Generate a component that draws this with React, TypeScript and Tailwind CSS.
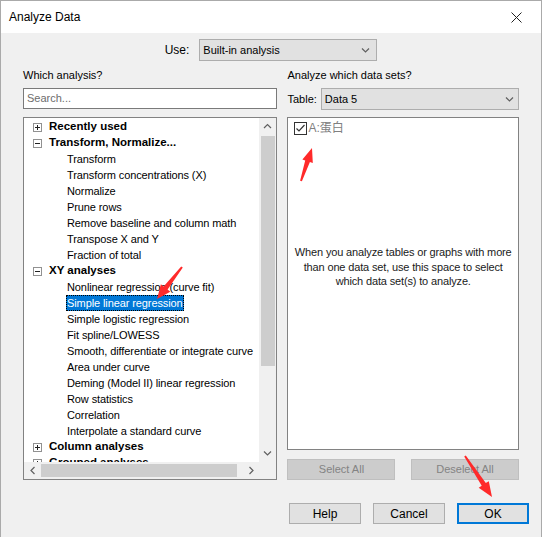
import React from "react";

type Row = { label: string; kind: "head" | "child"; expanded?: boolean; selected?: boolean };

const rows: Row[] = [
  { label: "Recently used", kind: "head", expanded: false },
  { label: "Transform, Normalize...", kind: "head", expanded: true },
  { label: "Transform", kind: "child" },
  { label: "Transform concentrations (X)", kind: "child" },
  { label: "Normalize", kind: "child" },
  { label: "Prune rows", kind: "child" },
  { label: "Remove baseline and column math", kind: "child" },
  { label: "Transpose X and Y", kind: "child" },
  { label: "Fraction of total", kind: "child" },
  { label: "XY analyses", kind: "head", expanded: true },
  { label: "Nonlinear regression (curve fit)", kind: "child" },
  { label: "Simple linear regression", kind: "child", selected: true },
  { label: "Simple logistic regression", kind: "child" },
  { label: "Fit spline/LOWESS", kind: "child" },
  { label: "Smooth, differentiate or integrate curve", kind: "child" },
  { label: "Area under curve", kind: "child" },
  { label: "Deming (Model II) linear regression", kind: "child" },
  { label: "Row statistics", kind: "child" },
  { label: "Correlation", kind: "child" },
  { label: "Interpolate a standard curve", kind: "child" },
  { label: "Column analyses", kind: "head", expanded: false },
  { label: "Grouped analyses", kind: "head", expanded: false },
];

function ExpandBox({ expanded }: { expanded: boolean }) {
  return (
    <svg width="9" height="9" viewBox="0 0 9 9" className="shrink-0">
      <rect x="0.5" y="0.5" width="8" height="8" fill="#fff" stroke="#919191" />
      <line x1="2" y1="4.5" x2="7" y2="4.5" stroke="#222" />
      {!expanded && <line x1="4.5" y1="2" x2="4.5" y2="7" stroke="#222" />}
    </svg>
  );
}

function Chevron({ dir }: { dir: "down" | "up" | "left" | "right" }) {
  const d =
    dir === "down"
      ? "M1 1.5 L4.5 5 L8 1.5"
      : dir === "up"
      ? "M1 5 L4.5 1.5 L8 5"
      : dir === "left"
      ? "M5.5 1 L2 4.5 L5.5 8"
      : "M2.5 1 L6 4.5 L2.5 8";
  const w = dir === "down" || dir === "up" ? 9 : 8;
  const h = dir === "down" || dir === "up" ? 7 : 9;
  return (
    <svg width={w} height={h} viewBox={`0 0 ${w} ${h}`}>
      <path d={d} fill="none" stroke="#606060" strokeWidth="1.2" />
    </svg>
  );
}

function arrowPoints(tx: number, ty: number, hx: number, hy: number, headLen: number, headW: number, tailW: number, neckW: number) {
  const dx = hx - tx;
  const dy = hy - ty;
  const len = Math.hypot(dx, dy);
  const ux = dx / len;
  const uy = dy / len;
  const px = -uy;
  const py = ux;
  const bx = hx - ux * headLen;
  const by = hy - uy * headLen;
  const pts = [
    [tx + px * tailW / 2, ty + py * tailW / 2],
    [bx + px * neckW / 2, by + py * neckW / 2],
    [bx + px * headW / 2, by + py * headW / 2],
    [hx, hy],
    [bx - px * headW / 2, by - py * headW / 2],
    [bx - px * neckW / 2, by - py * neckW / 2],
    [tx - px * tailW / 2, ty - py * tailW / 2],
  ];
  return pts.map((p) => `${p[0].toFixed(1)},${p[1].toFixed(1)}`).join(" ");
}

export default function App() {
  return (
    <div className="relative w-[542px] h-[537px] bg-[#f0f0f0] border-x border-t border-[#aaaaaa] flex flex-col font-['Liberation_Sans',Arial,sans-serif] text-[11px] text-black overflow-hidden">
      {/* Title bar */}
      <div className="h-[32px] bg-white flex items-center pl-[8px] pr-[19px] shrink-0">
        <span className="text-[12px] flex-1">Analyze Data</span>
        <svg width="11" height="11" viewBox="0 0 11 11">
          <path d="M0.5 0.5 L10.5 10.5 M10.5 0.5 L0.5 10.5" stroke="#222" strokeWidth="1" />
        </svg>
      </div>

      <div className="flex flex-col px-[22px]">
        {/* Use row */}
        <div className="mt-[6px] flex justify-center items-center gap-[10px] h-[22px]">
          <span className="text-[12px]">Use:</span>
          <div className="w-[178px] h-[22px] bg-[#e1e1e1] border border-[#adadad] flex items-center pl-[3px] pr-[6px]">
            <span className="flex-1 text-[11px]">Built-in analysis</span>
            <Chevron dir="down" />
          </div>
        </div>

        {/* Columns */}
        <div className="mt-[7px] flex gap-[10px]">
          {/* Left column */}
          <div className="w-[255px] flex flex-col">
            <div className="h-[14px] leading-[14px]">Which analysis?</div>
            <div className="mt-[6px] h-[21px] bg-white border border-[#7a7a7a] flex items-center pl-[3px] text-[#6d6d6d]">
              Search...
            </div>
            <div className="mt-[8px] h-[363px] bg-white border border-[#828282] flex flex-col">
              <div className="flex flex-1 min-h-0">
                <div className="flex-1 overflow-hidden pt-[1px]">
                  {rows.map((r, i) =>
                    r.kind === "head" ? (
                      <div key={i} className="h-[16px] flex items-center pl-[9px] whitespace-nowrap">
                        <ExpandBox expanded={!!r.expanded} />
                        <span className="ml-[7px] font-bold text-[11.5px]">{r.label}</span>
                      </div>
                    ) : (
                      <div key={i} className="h-[16px] flex items-center pl-[42px] whitespace-nowrap tracking-[-0.1px]">
                        {r.selected ? (
                          <span className="bg-[#0078d7] text-white px-[1px] h-[16px] leading-[16px] outline-1 outline-dotted outline-[#000] -outline-offset-1">
                            {r.label}
                          </span>
                        ) : (
                          <span className="px-[1px]">{r.label}</span>
                        )}
                      </div>
                    )
                  )}
                </div>
                {/* vertical scrollbar */}
                <div className="w-[17px] bg-[#f0f0f0] flex flex-col items-center">
                  <div className="h-[17px] flex items-center justify-center">
                    <Chevron dir="up" />
                  </div>
                  <div className="mt-[1px] w-[14px] h-[230px] bg-[#cdcdcd]" />
                  <div className="flex-1" />
                  <div className="h-[17px] flex items-center justify-center">
                    <Chevron dir="down" />
                  </div>
                </div>
              </div>
              {/* horizontal scrollbar */}
              <div className="h-[17px] flex bg-[#f0f0f0] shrink-0">
                <div className="w-[17px] flex items-center justify-center">
                  <Chevron dir="left" />
                </div>
                <div className="w-[196px] h-[13px] my-[2px] bg-[#cdcdcd]" />
                <div className="flex-1" />
                <div className="w-[17px] flex items-center justify-center">
                  <Chevron dir="right" />
                </div>
                <div className="w-[17px]" />
              </div>
            </div>
          </div>

          {/* Right column */}
          <div className="w-[232px] flex flex-col">
            <div className="h-[14px] leading-[14px]">Analyze which data sets?</div>
            <div className="mt-[6px] h-[22px] flex items-center gap-[4px]">
              <span>Table:</span>
              <div className="flex-1 h-[22px] bg-[#e1e1e1] border border-[#adadad] flex items-center pl-[3px] pr-[4px]">
                <span className="flex-1">Data 5</span>
                <Chevron dir="down" />
              </div>
            </div>
            <div className="mt-[7px] h-[333px] bg-white border border-[#828282] flex flex-col">
              <div className="mt-[3px] ml-[6px] h-[14px] flex items-center">
                <svg width="13" height="13" viewBox="0 0 13 13">
                  <rect x="0.5" y="0.5" width="12" height="12" fill="#fff" stroke="#333" />
                  <path d="M2.5 6.5 L5 9 L10.5 3" fill="none" stroke="#333" strokeWidth="1.2" />
                </svg>
                <span className="ml-[1px] text-[12px] text-[#808080] font-['Liberation_Sans','Noto_Sans_CJK_SC',sans-serif]">A:蛋白</span>
              </div>
              <div className="mt-[110px] text-center leading-[14.5px] text-[#1a1a1a] whitespace-nowrap tracking-[-0.15px]">
                When you analyze tables or graphs with more
                <br />
                than one data set, use this space to select
                <br />
                which data set(s) to analyze.
              </div>
            </div>
            <div className="mt-[9px] flex justify-between">
              <div className="w-[108px] h-[21px] bg-[#cccccc] border border-[#bfbfbf] text-[#838383] flex items-center justify-center">
                Select All
              </div>
              <div className="w-[108px] h-[21px] bg-[#cccccc] border border-[#bfbfbf] text-[#838383] flex items-center justify-center">
                Deselect All
              </div>
            </div>
          </div>
        </div>
      </div>

      {/* Bottom buttons */}
      <div className="mt-[23px] flex justify-end gap-[12px] pr-[12px]">
        <div className="w-[72px] h-[21px] bg-[#e1e1e1] border border-[#adadad] flex items-center justify-center text-[12px]">
          Help
        </div>
        <div className="w-[72px] h-[21px] bg-[#e1e1e1] border border-[#adadad] flex items-center justify-center text-[12px]">
          Cancel
        </div>
        <div className="w-[72px] h-[21px] bg-[#e1e1e1] border-2 border-[#0078d7] flex items-center justify-center text-[12px]">
          OK
        </div>
      </div>

      {/* Red annotation arrows */}
      <svg className="absolute left-0 top-0 pointer-events-none" width="542" height="537" viewBox="0 0 542 537">
        <polygon points={arrowPoints(300, 180, 311, 147, 14, 11, 2, 5)} fill="#ff2a2a" />
        <polygon points={arrowPoints(181, 266, 156, 298, 14, 12, 2, 5)} fill="#ff2a2a" />
        <polygon points={arrowPoints(464, 455, 491, 496, 15, 12, 2, 5)} fill="#ff2a2a" />
      </svg>
    </div>
  );
}
